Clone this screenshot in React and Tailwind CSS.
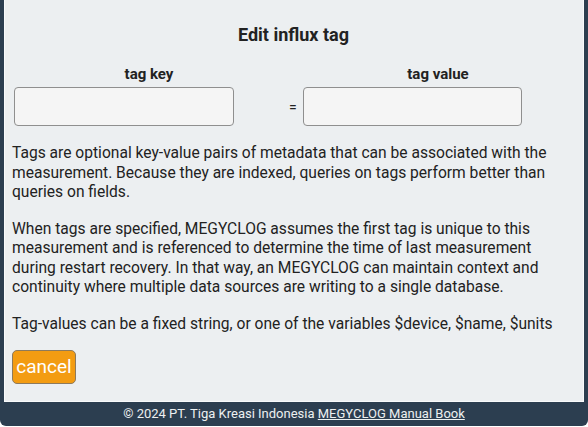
export default function App() {
  return (
    <div className="h-[427px] w-[588px] bg-white" style={{ fontFamily: 'Roboto, "Liberation Sans", sans-serif' }}>
      <div className="flex h-[426px] flex-col rounded-b-[6px] bg-[#2c3e50] px-1">
        {/* Dialog panel */}
        <div className="h-[402px] border-x border-b border-[#f8fafb] bg-[#eceff1] pl-[7px] pr-2 text-[#222]">
          <h2 className="pt-[23px] text-center text-lg font-bold leading-6">Edit influx tag</h2>

          <div className="mt-[17px] flex text-[15px] font-bold leading-5">
            <div className="ml-[2px] w-[270px] text-center">tag key</div>
            <div className="ml-[18px] w-[272px] text-center">tag value</div>
          </div>

          <div className="mt-[3px] flex items-center">
            <input className="ml-[2px] h-[39px] w-[220px] rounded border border-[#8f8f8f] bg-[#f5f5f5]" />
            <span className="ml-[55px] text-sm">=</span>
            <input className="ml-[6px] h-[39px] w-[219px] rounded border border-[#8f8f8f] bg-[#f5f5f5]" />
          </div>

          <div className="mt-[18px] text-[15.6px] leading-[19.5px]">
            <p>
              Tags are optional key-value pairs of metadata that can be associated with the measurement. Because they are
              indexed, queries on tags perform better than queries on fields.
            </p>
            <p className="mt-[17px]">
              When tags are specified, MEGYCLOG assumes the first tag is unique to this measurement and is referenced to
              determine the time of last measurement during restart recovery. In that way, an MEGYCLOG can maintain context
              and continuity where multiple data sources are writing to a single database.
            </p>
            <p className="mt-[17px]">
              Tag-values can be a fixed string, or one of the variables $device, $name, $units
            </p>
          </div>

          <button className="mt-4 h-[34px] w-[64px] rounded-[5px] border border-[#8d7a5c] bg-[#f39c12] text-[19px] text-white">
            cancel
          </button>
        </div>

        {/* Footer */}
        <div className="flex flex-1 items-center justify-center text-[13px] text-[#ecf0f1]">
          <span>
            © 2024 PT. Tiga Kreasi Indonesia <a className="underline">MEGYCLOG Manual Book</a>
          </span>
        </div>
      </div>
    </div>
  )
}
